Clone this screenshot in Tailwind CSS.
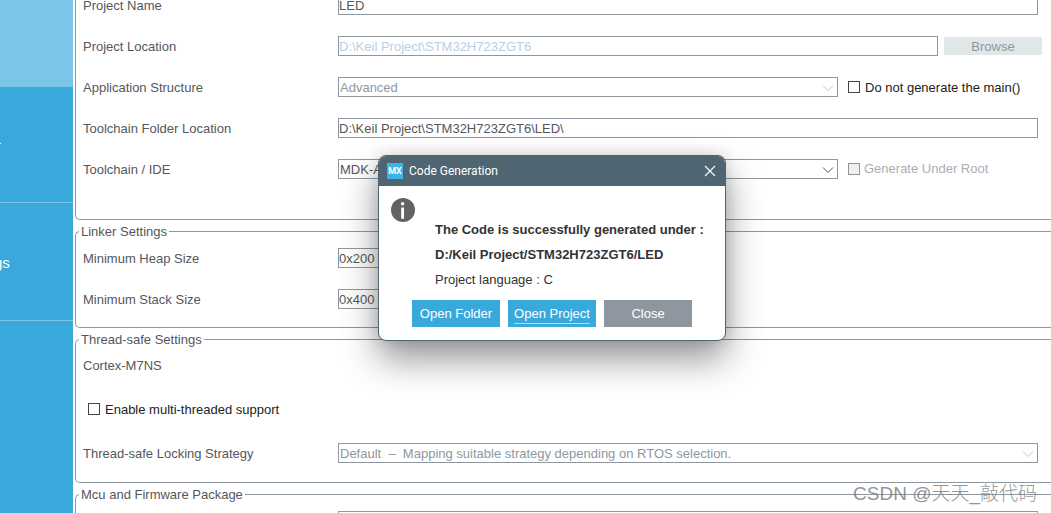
<!DOCTYPE html>
<html lang="en">
<head>
    <meta charset="UTF-8">
    <meta name="viewport" content="width=device-width, initial-scale=1.0">
    <title>Project Manager</title>
    <script src="https://cdn.jsdelivr.net/npm/@tailwindcss/browser@4"></script>
</head>
<body class="flex h-screen overflow-hidden bg-white font-['Liberation_Sans',Arial,sans-serif] text-[13px] text-[#55575c]">
    <!-- Sidebar -->
    <nav class="flex w-[73px] shrink-0 flex-col overflow-hidden bg-[#39a8db] text-[15px] text-white">
        <div class="h-[87px] bg-[#7bc5e8]"></div>
        <a href="#" class="flex h-[116px] items-center border-b border-[#7bc5e8] pt-1"><span class="-ml-1">r</span></a>
        <a href="#" class="flex h-[118px] items-center border-b border-[#7bc5e8] pt-1"><span class="-ml-[6px]">gs</span></a>
    </nav>

    <main class="relative min-w-0 flex-1 overflow-hidden pl-[2px]">
        <!-- Project -->
        <section class="-mt-[5px] flex flex-col gap-[21px] rounded-bl-[5px] border-b border-l border-[#8e979f] pr-[13px] pb-[40px] pl-[7px]">
            <div class="flex h-5 items-center">
                <label for="projectName" class="w-[255px] shrink-0 pt-[2px]">Project Name</label>
                <input type="text" id="projectName" value="LED" class="h-5 min-w-0 flex-1 border border-[#8e979f]">
            </div>
            <div class="-mr-1 flex h-5 items-center">
                <label for="projectLocation" class="w-[255px] shrink-0 pt-[2px]">Project Location</label>
                <input type="text" id="projectLocation" value="D:\Keil Project\STM32H723ZGT6" disabled class="h-5 min-w-0 flex-1 border border-[#8e979f] text-[#b8cfe5]">
                <button disabled class="ml-[6px] h-[18px] w-[98px] bg-[#e1e6e9] pt-px leading-[18px] text-[#8e979f]">Browse</button>
            </div>
            <div class="flex h-5 items-center">
                <label for="structure" class="w-[255px] shrink-0 pt-[2px]">Application Structure</label>
                <div class="relative h-5 min-w-0 flex-1">
                    <select id="structure" disabled class="block h-5 w-full appearance-none border border-[#8e979f] pl-px text-[#8e979f] opacity-100">
                        <option>Advanced</option>
                    </select>
                    <svg class="absolute top-2 right-1 h-[6px] w-[12px]" viewBox="0 0 12 6" fill="none" stroke="#c3c7ca"><path d="M1 .5l5 5 5-5"/></svg>
                </div>
                <label class="ml-[10px] flex w-[190px] items-center gap-[5px] text-[#222]">
                    <input type="checkbox" class="size-3 appearance-none border border-[#444]">
                    <span class="pt-[2px]">Do not generate the main()</span>
                </label>
            </div>
            <div class="flex h-5 items-center">
                <label for="toolchainFolder" class="w-[255px] shrink-0 pt-[2px]">Toolchain Folder Location</label>
                <input type="text" id="toolchainFolder" value="D:\Keil Project\STM32H723ZGT6\LED\" class="h-5 min-w-0 flex-1 border border-[#8e979f]">
            </div>
            <div class="flex h-5 items-center">
                <label for="toolchain" class="w-[255px] shrink-0 pt-[2px]">Toolchain / IDE</label>
                <div class="relative h-5 min-w-0 flex-1">
                    <select id="toolchain" class="block h-5 w-full appearance-none border border-[#8e979f] pl-px">
                        <option>MDK-ARM</option>
                    </select>
                    <svg class="absolute top-2 right-1 h-[6px] w-[12px]" viewBox="0 0 12 6" fill="none" stroke="#55575c"><path d="M1 .5l5 5 5-5"/></svg>
                </div>
                <label class="ml-[10px] flex w-[190px] items-center gap-1 text-[#abaeb1]">
                    <input type="checkbox" disabled class="size-3 appearance-none border border-[#8e979f] bg-[#f0f0f0]">Generate Under Root
                </label>
            </div>
        </section>

        <!-- Linker -->
        <fieldset class="rounded-l-[5px] border border-r-0 border-[#8e979f] pl-[7px]">
            <legend class="-ml-1 px-[2px] leading-[23px]">Linker Settings</legend>
            <div class="flex flex-col gap-[21px] pt-[5px] pb-[18px]">
                <div class="flex h-5 items-center">
                    <label for="heapSize" class="w-[255px] shrink-0 pt-[2px]">Minimum Heap Size</label>
                    <input type="text" id="heapSize" value="0x200" class="h-5 w-[200px] border border-[#8e979f]">
                </div>
                <div class="flex h-5 items-center">
                    <label for="stackSize" class="w-[255px] shrink-0 pt-[2px]">Minimum Stack Size</label>
                    <input type="text" id="stackSize" value="0x400" class="h-5 w-[200px] border border-[#8e979f]">
                </div>
            </div>
        </fieldset>

        <!-- Thread-safe -->
        <fieldset class="rounded-l-[5px] border border-r-0 border-[#8e979f] pl-[7px]">
            <legend class="-ml-1 px-[2px] leading-[23px]">Thread-safe Settings</legend>
            <div class="flex flex-col gap-6 pt-1 pr-[13px] pb-[19px]">
                <p class="h-5 pt-px leading-5">Cortex-M7NS</p>
                <label class="ml-[5px] flex h-5 items-center gap-[5px] text-[#222]">
                    <input type="checkbox" class="size-3 appearance-none border border-[#444]">
                    <span class="pt-[2px]">Enable multi-threaded support</span>
                </label>
                <div class="flex h-5 items-center">
                    <label for="locking" class="w-[255px] shrink-0 pt-[2px]">Thread-safe Locking Strategy</label>
                    <div class="relative h-5 min-w-0 flex-1">
                        <select id="locking" disabled class="block h-5 w-full appearance-none border border-[#8e979f] pl-px text-[#8e979f] opacity-100">
                            <option>Default&nbsp; –&nbsp; Mapping suitable strategy depending on RTOS selection.</option>
                        </select>
                        <svg class="absolute top-2 right-1 h-[6px] w-[12px]" viewBox="0 0 12 6" fill="none" stroke="#c3c7ca"><path d="M1 .5l5 5 5-5"/></svg>
                    </div>
                </div>
            </div>
        </fieldset>

        <!-- Firmware -->
        <fieldset class="rounded-l-[5px] border border-r-0 border-[#8e979f] pl-[7px]">
            <legend class="-ml-1 px-[2px] leading-[23px]">Mcu and Firmware Package</legend>
            <div class="flex pt-[5px] pr-[13px] pl-[255px]">
                <input type="text" aria-label="Mcu Reference" class="h-5 min-w-0 flex-1 border border-[#8e979f]">
            </div>
        </fieldset>

        <!-- Code generation dialog -->
        <div role="dialog" aria-labelledby="dialogTitle" class="absolute top-[155px] left-[305px] w-[348px] overflow-hidden rounded-lg border border-[#4f6571] bg-white text-[#333] shadow-[0_18px_36px_rgba(0,0,0,0.42),0_0_14px_rgba(0,0,0,0.12)]">
            <header class="flex h-[30px] items-center bg-[#4f6571] pr-[9px] pl-2 text-white">
                <span class="mr-[6px] size-4 bg-[#3cb4e7] text-center font-[Roboto,sans-serif] text-[9px] leading-4 font-bold">MX</span>
                <h1 id="dialogTitle" class="flex-1 font-[Roboto,sans-serif] text-xs">Code Generation</h1>
                <button aria-label="Close dialog">
                    <svg class="size-3" viewBox="0 0 12 12" fill="none" stroke="white" stroke-width="1.1"><path d="M1 1l10 10M11 1L1 11"/></svg>
                </button>
            </header>
            <div class="flex gap-5 pt-3 pl-3">
                <svg class="size-6" viewBox="0 0 24 24">
                    <circle cx="12" cy="12" r="12" fill="#636363"/>
                    <circle cx="11.6" cy="5.8" r="1.7" fill="white"/>
                    <path d="M10.2 9.4h2.8v11.4h-2.8z" fill="white"/>
                </svg>
                <div class="pt-[19px] leading-[25px]">
                    <p class="font-bold">The Code is successfully generated under :</p>
                    <p class="font-bold">D:/Keil Project/STM32H723ZGT6/LED</p>
                    <p>Project language : C</p>
                </div>
            </div>
            <div class="flex justify-center gap-2 pt-2 pb-[13px] text-white">
                <button class="h-[27px] w-[88px] bg-[#39a8db]">Open Folder</button>
                <button class="h-[27px] w-[88px] bg-[#39a8db] px-[6px] pb-[3px]"><span class="block border-b border-[#b0dcf1] pt-[5px] leading-[18px]">Open Project</span></button>
                <button class="h-[27px] w-[88px] bg-[#8e979f]">Close</button>
            </div>
        </div>

        <p class="absolute right-[14px] bottom-[5px] font-['Liberation_Sans','Noto_Sans_CJK_SC',sans-serif] text-[19px] leading-7 font-light whitespace-nowrap text-[#777]/80">CSDN @天天_敲代码</p>
    </main>
</body>
</html>
